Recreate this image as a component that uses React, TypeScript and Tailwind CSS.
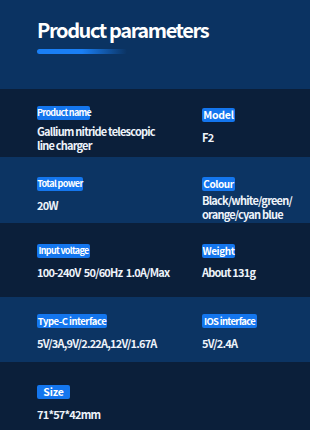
const font = { fontFamily: '"Noto Sans CJK SC", "Noto Sans", sans-serif' }

type Cell = {
  label: string
  value: string[]
  labelClass: string
  gap: string
  top?: string
}

type Row = {
  bg: string
  h: string
  pt: string
  left: Cell
  right?: Cell
}

const rows: Row[] = [
  {
    bg: "bg-[#0b1f3a]",
    h: "h-[68px]",
    pt: "pt-[17px]",
    left: {
      label: "Product name",
      value: ["Gallium nitride telescopic", "line charger"],
      labelClass: "w-[53px] text-[9px] tracking-[-0.7px]",
      gap: "mt-[4px] leading-[14px]",
    },
    right: {
      label: "Model",
      value: ["F2"],
      labelClass: "w-[33px] text-[10.5px] tracking-[-0.2px]",
      gap: "mt-[8px] leading-[14px]",
      top: "pt-[2px]",
    },
  },
  {
    bg: "bg-[#0c3463]",
    h: "h-[66px]",
    pt: "pt-[20px]",
    left: {
      label: "Total power",
      value: ["20W"],
      labelClass: "w-[46px] text-[9px] tracking-[-0.6px]",
      gap: "mt-[7px] leading-[14px]",
    },
    right: {
      label: "Colour",
      value: ["Black/white/green/", "orange/cyan blue"],
      labelClass: "w-[33px] text-[10px] tracking-[-0.4px]",
      gap: "mt-[3px] leading-[13.5px]",
    },
  },
  {
    bg: "bg-[#0b1f3a]",
    h: "h-[74px]",
    pt: "pt-[21px]",
    left: {
      label: "Input voltage",
      value: ["100-240V\u00a0 50/60Hz\u00a0 1.0A/Max"],
      labelClass: "w-[53px] text-[9px] tracking-[-0.7px]",
      gap: "mt-[7px] leading-[14px]",
    },
    right: {
      label: "Weight",
      value: ["About 131g"],
      labelClass: "w-[33px] text-[10px] tracking-[-0.4px]",
      gap: "mt-[7px] leading-[14px]",
    },
  },
  {
    bg: "bg-[#0c3463]",
    h: "h-[65px]",
    pt: "pt-[17px]",
    left: {
      label: "Type-C interface",
      value: ["5V/3A,9V/2.22A,12V/1.67A"],
      labelClass: "w-[70px] text-[9.5px] tracking-[-0.5px]",
      gap: "mt-[8px] leading-[14px]",
    },
    right: {
      label: "IOS interface",
      value: ["5V/2.4A"],
      labelClass: "w-[55px] text-[9.5px] tracking-[-0.7px]",
      gap: "mt-[8px] leading-[14px]",
    },
  },
  {
    bg: "bg-[#0b1f3a]",
    h: "h-[68px]",
    pt: "pt-[23px]",
    left: {
      label: "Size",
      value: ["71*57*42mm"],
      labelClass: "w-[33px] text-[10.5px] tracking-[-0.2px]",
      gap: "mt-[8px] leading-[14px]",
    },
  },
]

function Param({ cell }: { cell: Cell }) {
  return (
    <div className={`flex flex-col items-start ${cell.top ?? ""}`}>
      <span
        className={`block rounded-[2px] bg-[#1476ee] text-center font-bold leading-[14px] whitespace-nowrap text-white ${cell.labelClass}`}
      >
        {cell.label}
      </span>
      <div className={`text-[11px] font-bold tracking-[-0.8px] whitespace-nowrap text-[#eef3fa] ${cell.gap}`}>
        {cell.value.map((line) => (
          <div key={line}>{line}</div>
        ))}
      </div>
    </div>
  )
}

export default function App() {
  return (
    <div className="w-[310px] h-[430px] overflow-hidden" style={font}>
      <div className="h-[89px] bg-[#0b3362] pl-[37px] pt-[16px]">
        <h1 className="text-[20px] font-bold leading-[28px] tracking-[-1.4px] text-white">
          Product parameters
        </h1>
        <div className="mt-[5px] h-[5px] w-[90px] rounded-full bg-gradient-to-r from-[#1a7ff5] via-[#1a7ff5] to-transparent" />
      </div>

      {rows.map((row) => (
        <div key={row.left.label} className={`flex px-[37px] ${row.bg} ${row.h} ${row.pt}`}>
          <div className="w-[165px] shrink-0">
            <Param cell={row.left} />
          </div>
          {row.right && <Param cell={row.right} />}
        </div>
      ))}
    </div>
  )
}
